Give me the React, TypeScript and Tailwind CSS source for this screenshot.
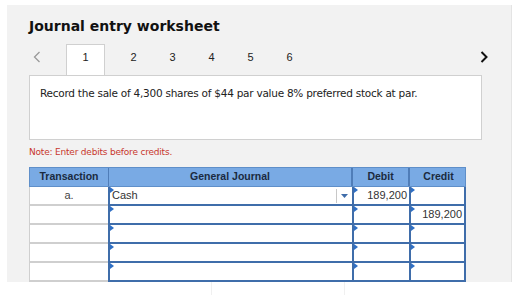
import React from "react";

const rows = [
  { tx: "a.", account: "Cash", debit: "189,200", credit: "", select: true },
  { tx: "", account: "", debit: "", credit: "189,200", select: false },
  { tx: "", account: "", debit: "", credit: "", select: false },
  { tx: "", account: "", debit: "", credit: "", select: false },
  { tx: "", account: "", debit: "", credit: "", select: false },
  { tx: "", account: "", debit: "", credit: "", select: false },
];

function Flag() {
  return (
    <span className="absolute left-0 top-0 w-0 h-0 border-t-[3px] border-b-[3px] border-l-[4px] border-t-transparent border-b-transparent border-l-[#2f6fc4]" />
  );
}

function InputCell({ children, right }: { children?: React.ReactNode; right?: boolean }) {
  return (
    <div
      className={`relative h-full border-l-2 border-b-2 border-[#3f6daa] bg-white flex items-center px-[2px] text-[11px] text-[#333] ${
        right ? "justify-end" : ""
      }`}
    >
      <Flag />
      {children}
    </div>
  );
}

export default function App() {
  return (
    <div className="w-[514px] h-[295px] bg-white overflow-hidden" style={{ fontFamily: '"DejaVu Sans", sans-serif' }}>
      <div className="ml-[7px] mt-[5px] w-[505px] h-[277px] bg-[#f2f2f2] border-r border-[#e4e4e4] overflow-hidden pl-[22px]">
        <h1 className="pt-[12px] text-[14px] leading-[18px] font-bold text-[#111]">Journal entry worksheet</h1>

        {/* tabs */}
        <div className="relative mt-[9px] h-[31px] flex items-start">
          <svg className="absolute left-[4px] top-[7px]" width="8" height="12" viewBox="0 0 8 12">
            <path d="M6.5 1 L1.5 6 L6.5 11" fill="none" stroke="#9a9a9a" strokeWidth="1.3" />
          </svg>
          <div className="ml-[37px] w-[39px] h-[31px] bg-white border border-b-0 border-[#d0d0d0] flex items-start justify-center pt-[4px] text-[11px] text-[#222] relative z-10 -mb-px" style={{ fontFamily: '"Liberation Sans", sans-serif' }}>
            1
          </div>
          <div className="ml-[9px] flex text-[11px] text-[#222]" style={{ fontFamily: '"Liberation Sans", sans-serif' }}>
            {["2", "3", "4", "5", "6"].map((n) => (
              <div key={n} className="w-[39px] pt-[5px] text-center">
                {n}
              </div>
            ))}
          </div>
          <svg className="absolute left-[451px] top-[7px]" width="8" height="12" viewBox="0 0 8 12">
            <path d="M1.5 1 L6.5 6 L1.5 11" fill="none" stroke="#111" strokeWidth="2" />
          </svg>
        </div>

        {/* question box */}
        <div className="w-[453px] h-[65px] bg-white border border-[#d0d0d0] px-[10px] pt-[10px] text-[10.5px] tracking-[-0.25px] text-[#222]">
          Record the sale of 4,300 shares of $44 par value 8% preferred stock at par.
        </div>

        <p className="mt-[6px] text-[9px] tracking-[-0.2px] leading-[12px] text-[#c8372d]">Note: Enter debits before credits.</p>

        {/* journal table */}
        <div className="mt-[9px] w-[437px]" style={{ fontFamily: '"Liberation Sans", sans-serif' }}>
          <div className="grid grid-cols-[79px_244px_57px_57px] h-[20px] bg-[#79aae4] border border-[#5f8fc9] text-[10.5px] font-bold text-[#1b2a40]">
            <div className="flex items-center justify-center border-r border-[#4f7db8]">Transaction</div>
            <div className="flex items-center justify-center border-r-2 border-[#4f7db8]">General Journal</div>
            <div className="flex items-center justify-center border-r-2 border-[#4f7db8]">Debit</div>
            <div className="flex items-center justify-center">Credit</div>
          </div>
          {rows.map((r, i) => (
            <div key={i} className="grid grid-cols-[79px_244px_57px_57px] h-[19px]">
              <div className="bg-white border-l border-b-2 border-[#cfcfcf] flex items-center justify-center text-[11px] text-[#444]">
                {r.tx}
              </div>
              <InputCell>
                <span className="flex-1">{r.account}</span>
                {r.select && (
                  <span className="flex items-center h-full">
                    <span className="w-px h-[14px] bg-[#c8c8c8] mr-[4px]" />
                    <svg width="7" height="4" viewBox="0 0 7 4" className="mr-[2px]">
                      <path d="M0 0 L7 0 L3.5 4 Z" fill="#3f6daa" />
                    </svg>
                  </span>
                )}
              </InputCell>
              <InputCell right>{r.debit}</InputCell>
              <div className="border-r-2 border-[#3f6daa] h-full">
                <InputCell right>{r.credit}</InputCell>
              </div>
            </div>
          ))}
        </div>
      </div>
      <div className="flex h-[13px] bg-white">
        <div className="w-[212px] border-r border-[#f0f0f0]" />
        <div className="w-[133px] border-r border-[#f0f0f0]" />
      </div>
    </div>
  );
}
